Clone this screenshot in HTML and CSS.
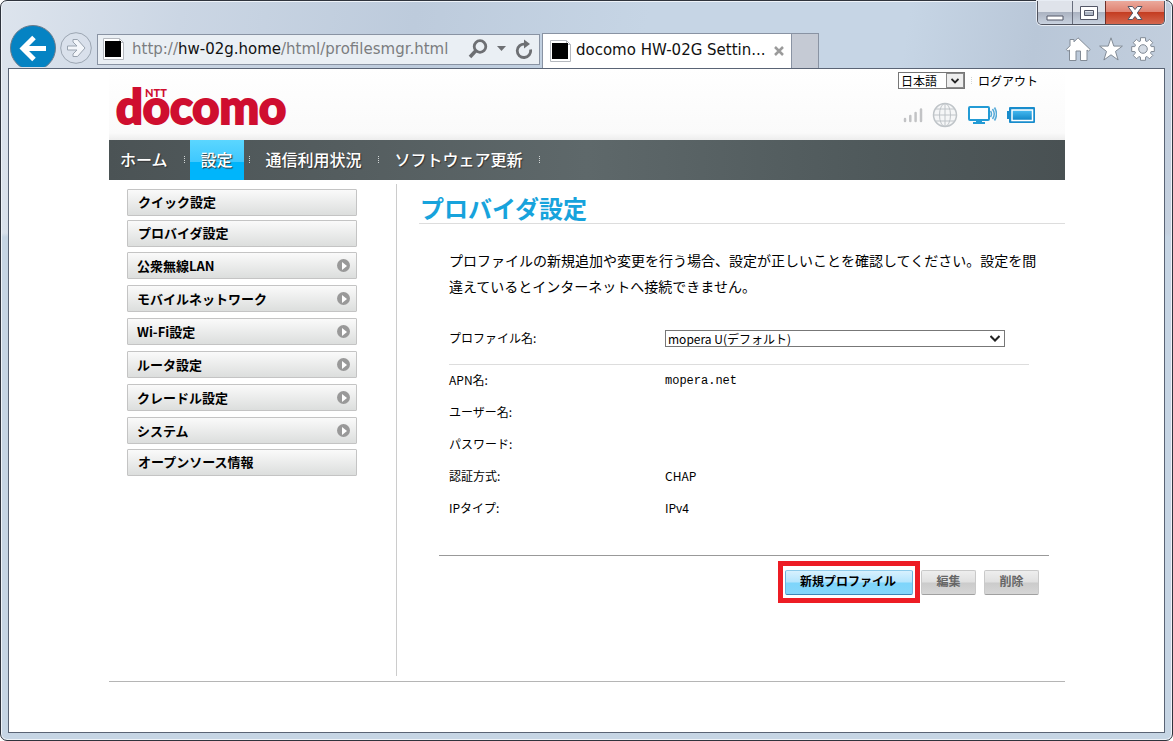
FILE: index.html
```html
<!DOCTYPE html>
<html lang="ja">
<head>
<meta charset="utf-8">
<title>docomo HW-02G Settings</title>
<link rel="stylesheet" href="styles.css">
</head>
<body>
<div class="window">
  <header class="chrome">
    <button class="icon-btn" aria-label="戻る">
      <svg width="46" height="42" viewBox="0 0 46 42"><circle cx="23" cy="23" r="22.5" fill="#0583c3" stroke="#6c7b8a"/><path d="M36 23.500H14M24 12.500L13 23.500L24 34.500" fill="none" stroke="#fff" stroke-width="5"/></svg>
    </button>
    <button class="icon-btn forward" aria-label="進む">
      <svg width="32" height="32" viewBox="0 0 32 32"><circle cx="16" cy="16" r="15.300" fill="#dce3ec" fill-opacity=".6" stroke="#9ba5b1"/><path d="M7.500 14h9.500l-4-4v-2.500h4.500l7.500 8.500-7.500 8.500h-4.500v-2.500l4-4h-9.500z" fill="#f3f6fa" stroke="#99a3af"/></svg>
    </button>
    <div class="address">
      <svg width="23" height="24" viewBox="0 0 23 24"><path d="M1.500 1.500h16l4 4v17h-20z" fill="#fff" stroke="#b5b9bf"/><path d="M17.500 1.500v4h4" fill="none" stroke="#b5b9bf"/><path d="M3 4h16v16H3z"/></svg>
      <div class="url" role="textbox" contenteditable="true" spellcheck="false" aria-label="アドレス">http://<span class="host">hw-02g.home</span>/html/profilesmgr.html</div>
      <button class="icon-btn" aria-label="検索">
        <svg width="20" height="20" viewBox="0 0 20 20" fill="none" stroke="#6d6f73"><circle cx="12" cy="7.500" r="5.800" stroke-width="2.800"/><path d="M8 11.500L2 18" stroke-width="3.500"/></svg>
      </button>
      <button class="icon-btn" aria-label="履歴"><svg width="9" height="5" viewBox="0 0 9 5"><path d="M0 0h9L4.500 5z" fill="#6d6f73"/></svg></button>
      <button class="icon-btn" aria-label="更新">
        <svg width="18" height="20" viewBox="0 0 18 20"><path d="M15.500 10.500A6.700 6.700 0 1 1 10 5.200" fill="none" stroke="#6d6f73" stroke-width="2.800"/><path d="M9 .5v9l6-4.500z" fill="#6d6f73"/></svg>
      </button>
    </div>
    <div class="tab">
      <svg width="23" height="24" viewBox="0 0 23 24"><path d="M1.500 1.500h16l4 4v17h-20z" fill="#fff" stroke="#b5b9bf"/><path d="M17.500 1.500v4h4" fill="none" stroke="#b5b9bf"/><path d="M3 4h16v16H3z"/></svg>
      <span class="tab-title">docomo HW-02G Settin...</span>
      <button class="icon-btn" aria-label="タブを閉じる"><svg width="10" height="10" viewBox="0 0 10 10"><path d="M1 1l8 8M9 1L1 9" stroke="#9b9b9b" stroke-width="2.500"/></svg></button>
    </div>
    <button class="new-tab" aria-label="新しいタブ"></button>
    <div class="commands">
      <button class="icon-btn" aria-label="ホームページ"><svg width="26" height="24" viewBox="0 0 26 24"><path d="M13 .8L25.200 12.500l-1.700 1.700-1.500-1.200v10.500h-6.500v-9.500h-4.500v9.500H4.500V13l-1.500 1.200-1.700-1.700L5 8.800V2.500h4v2.300z" fill="#fff" stroke="#828b96"/></svg></button>
      <button class="icon-btn" aria-label="お気に入り"><svg width="24" height="24" viewBox="0 0 24 24"><path d="M12 .8l2.800 8.300h8.600l-6.900 5.300 2.600 8.600-7.100-5.200L4.900 23l2.600-8.600L.6 9.100h8.600z" fill="#fff" stroke="#828b96"/></svg></button>
      <button class="icon-btn" aria-label="ツール"><svg width="24" height="24" viewBox="0 0 24 24"><path d="M9.500 .7h5v3.200l1.600.7 2.300-2.300 3.400 3.400-2.300 2.300.7 1.600h3.100v4.900h-3.100l-.7 1.600 2.300 2.300-3.400 3.400-2.300-2.300-1.600.7v3.100h-5v-3.100l-1.600-.7-2.300 2.300-3.400-3.400 2.300-2.300-.7-1.600H.7V9.600h3.100l.7-1.600-2.300-2.300 3.400-3.400 2.300 2.300 1.600-.7z" fill="#fff" stroke="#828b96"/><circle cx="12" cy="12" r="4.300" fill="#d5dce5" stroke="#828b96"/></svg></button>
    </div>
    <div class="window-controls">
      <button class="wc-min" aria-label="最小化"><svg width="18" height="14" viewBox="0 0 18 14"><path d="M1 9h16v4H1z" fill="#fff" stroke="#535666"/></svg></button>
      <button class="wc-max" aria-label="最大化"><svg width="18" height="14" viewBox="0 0 18 14"><path d="M.5 .5h17v13H.5zM4.500 4.500v5h9v-5z" fill="#fff" fill-rule="evenodd" stroke="#535666"/></svg></button>
      <button class="wc-close" aria-label="閉じる"><svg width="16" height="14" viewBox="0 0 16 14"><path d="M1 .5h4.500L8 3.500 10.500 .5H15L10.300 7 15 13.500h-4.500L8 10.500l-2.500 3H1L5.700 7z" fill="#fff" stroke="#535666"/></svg></button>
    </div>
  </header>

  <div class="viewport">
    <div class="page">
      <div class="banner">
        <svg class="logo" width="180" height="52" viewBox="0 0 180 52" role="img" aria-label="NTT docomo">
          <text class="logo-name" x="0" y="38">docomo</text>
          <text class="logo-ntt" x="29" y="11">NTT</text>
        </svg>
        <div class="tools">
          <div class="session">
            <span class="select-box language"><select aria-label="言語"><option>日本語</option></select><span class="arrow"><svg width="8" height="6" viewBox="0 0 8 6"><path d="M.5 1L4 4.500 7.500 1" fill="none" stroke="#222" stroke-width="1.800"/></svg></span></span>
            <span class="dots pale"></span>
            <a href="#">ログアウト</a>
          </div>
          <div class="status">
            <svg width="20" height="16" viewBox="0 0 20 16" stroke="#c2c3c5" stroke-width="2.500" stroke-linecap="round"><path d="M2 14v-2M7.300 14V9M12.600 14V6M18 14V2.500"/></svg>
            <svg width="26" height="26" viewBox="0 0 26 26" fill="none" stroke="#bfc4c8"><circle cx="13" cy="13" r="11.500" stroke-width="1.500" fill="#f5f6f7"/><ellipse cx="13" cy="13" rx="5.500" ry="11.500"/><path d="M13 1.500v23M1.500 13h23M3.500 7h19M3.500 19h19"/></svg>
            <svg width="30" height="20" viewBox="0 0 30 20"><rect x="2" y="2" width="20" height="13" rx="1" fill="#fff" stroke="#239bd5" stroke-width="2"/><path d="M9 15h6v2h3v2H6v-2h3z" fill="#239bd5"/><path d="M23.500 6q2 3 0 6M25.500 4q3.500 5 0 10M27.500 2.500q4 6.500 0 13" fill="none" stroke="#55a9d7" stroke-width="1.500"/></svg>
            <svg width="30" height="18" viewBox="0 0 30 18"><defs><linearGradient id="charge" x2="0" y2="1"><stop stop-color="#49bcf2"/><stop offset="1" stop-color="#0d84c6"/></linearGradient></defs><path d="M1 5h2V2q0-1 1-1h24q1 0 1 1v14q0 1-1 1H4q-1 0-1-1v-3H1z" fill="#188ccc"/><rect x="6" y="4" width="20.500" height="10.500" fill="url(#charge)" stroke="#fff" stroke-width="1.500"/></svg>
          </div>
        </div>
      </div>

      <nav class="main-nav">
        <a href="#">ホーム</a><span class="dots"></span>
        <a href="#" class="active">設定</a><span class="dots"></span>
        <a href="#">通信利用状況</a><span class="dots"></span>
        <a href="#">ソフトウェア更新</a><span class="dots"></span>
      </nav>

      <div class="columns">
        <nav class="side-nav">
          <a href="#">クイック設定</a>
          <a href="#">プロバイダ設定</a>
          <a href="#" class="group">公衆無線LAN</a>
          <a href="#" class="group">モバイルネットワーク</a>
          <a href="#" class="group">Wi-Fi設定</a>
          <a href="#" class="group">ルータ設定</a>
          <a href="#" class="group">クレードル設定</a>
          <a href="#" class="group">システム</a>
          <a href="#">オープンソース情報</a>
        </nav>
        <main class="content">
          <h1>プロバイダ設定</h1>
          <p class="intro">プロファイルの新規追加や変更を行う場合、設定が正しいことを確認してください。設定を間違えているとインターネットへ接続できません。</p>
          <div class="profile">
            <label for="profile">プロファイル名:</label>
            <span class="select-box wide"><select id="profile"><option>mopera U(デフォルト)</option></select><span class="arrow"><svg width="10" height="7" viewBox="0 0 10 7"><path d="M.5 1L5 5.500 9.500 1" fill="none" stroke="#222" stroke-width="2"/></svg></span></span>
          </div>
          <dl class="details">
            <dt>APN名:</dt><dd class="mono">mopera.net</dd>
            <dt>ユーザー名:</dt><dd></dd>
            <dt>パスワード:</dt><dd></dd>
            <dt>認証方式:</dt><dd>CHAP</dd>
            <dt>IPタイプ:</dt><dd>IPv4</dd>
          </dl>
          <div class="actions">
            <span class="highlight"><button class="btn primary">新規プロファイル</button></span>
            <button class="btn" disabled>編集</button>
            <button class="btn" disabled>削除</button>
          </div>
        </main>
      </div>
    </div>
  </div>
</div>
</body>
</html>
```
FILE: styles.css
```css
* { box-sizing: border-box; }

body {
  margin: 0;
  background: #fff;
  color: #000;
  font-family: "Noto Sans CJK JP", sans-serif;
  font-size: 12px;
}

a { color: inherit; text-decoration: none; }
svg { display: block; flex: none; }
button, select { font: inherit; margin: 0; }

.window {
  position: relative;
  display: flex;
  flex-direction: column;
  min-height: 100vh;
  padding: 0 7px 7px;
  border: 1px solid #2f343d;
  border-radius: 7px;
  box-shadow: inset 0 0 0 1px #eef3f9;
  background: linear-gradient(180deg, transparent 0 232px, #c6d5e4 236px),
    linear-gradient(100deg, #dde4ed 0, #cbd6e4 14%, #bdcbdc 32%, #c6d5e5 50%, #c6d5e5 70%, #b9c7d8 80%, #c3cfde 92%, #d9e0e9);
}

/* Browser chrome */
.chrome {
  display: flex;
  align-items: flex-end;
  height: 67px;
  padding-left: 2px;
}
.icon-btn {
  display: flex;
  flex: none;
  padding: 0;
  border: 0;
  background: none;
}
.chrome > .icon-btn { margin-bottom: 1px; }
.chrome > .icon-btn.forward { margin: 0 5px 4px 4px; }
.address {
  display: flex;
  align-items: center;
  flex: 0 1 443px;
  height: 31px;
  margin: 0 2px 3px 0;
  padding: 0 6px 2px 4px;
  border: 1px solid #8993a3;
  background: #eaeff4;
}
.address .icon-btn { margin-left: 9px; }
.address .url + .icon-btn { margin-left: 6px; }
.url {
  flex: 1;
  padding-left: 7px;
  overflow: hidden;
  white-space: nowrap;
  color: #7b7d80;
  font: 15px "DejaVu Sans", sans-serif;
}
.host { color: #111; }
.tab {
  display: flex;
  align-items: center;
  flex: 0 1 250px;
  height: 35px;
  padding: 0 7px 0 6px;
  border: 1px solid #8993a3;
  border-bottom: 0;
  background: #fff;
}
.tab-title {
  flex: 1;
  padding: 0 0 2px 4px;
  overflow: hidden;
  white-space: nowrap;
  color: #111;
  font: 15px "DejaVu Sans", sans-serif;
}
.new-tab {
  width: 27px;
  height: 35px;
  padding: 0;
  border: 1px solid #8993a3;
  border-width: 1px 1px 0 0;
  background: #c5cad4;
}
.commands {
  display: flex;
  gap: 8px;
  margin: 0 10px 7px auto;
}
.window-controls {
  position: absolute;
  top: 0;
  right: 7px;
  display: flex;
  height: 24px;
  border: 1px solid #50535e;
  border-top: 0;
  border-radius: 0 0 5px 5px;
  box-shadow: 0 0 0 1px #e8edf4;
  overflow: hidden;
}
.window-controls button {
  display: flex;
  align-items: center;
  justify-content: center;
  width: 34px;
  padding: 0;
  border: 0;
  background: linear-gradient(#dfe3ea 0 48%, #abb3c1 50%, #c9d2df);
}
.window-controls .wc-min { padding-top: 2px; }
.window-controls .wc-max { width: 33px; border-left: 1px solid #676d7c; }
.window-controls .wc-close {
  width: 59px;
  border-left: 1px solid #6b2f28;
  background: linear-gradient(#eba99c 0, #df8170 48%, #c43d22 50%, #d5674e);
}

/* Page */
.viewport {
  flex: 1;
  padding: 0 99px 50px 100px;
  border: 1px solid #5a6475;
  background: #fff;
}
.page { border-bottom: 1px solid #b5b5b5; }
.banner {
  display: flex;
  justify-content: space-between;
  height: 71px;
  padding: 3px 27px 0 7px;
  background: linear-gradient(#fff, #fafafa 90%, #ededed);
}
.logo {
  margin-top: 14px;
  overflow: visible;
  fill: #cf0e2f;
  stroke: #cf0e2f;
}
.logo-name { font: 900 47px Lato, sans-serif; stroke-width: 2px; }
.logo-ntt { font: 900 11px Lato, sans-serif; stroke-width: 0; }
.tools {
  display: flex;
  flex-direction: column;
  align-items: flex-end;
  gap: 13px;
}
.session { display: flex; align-items: center; line-height: 17px; }
.session .dots { margin: 0 6px; }
.status { display: flex; align-items: center; gap: 9px; padding-right: 2px; }
.select-box { position: relative; display: block; height: 17px; }
.select-box select {
  display: block;
  width: 100%;
  height: 100%;
  padding: 0 2px;
  border: 1px solid #777;
  border-radius: 0;
  background: #fff;
  color: #000;
  line-height: 15px;
  appearance: none;
}
.arrow {
  position: absolute;
  inset: 1px 1px 1px auto;
  display: flex;
  align-items: center;
  justify-content: center;
  width: 18px;
  pointer-events: none;
}
.language { width: 67px; }
.language .arrow { border: 1px solid #8a8a8a; background: #eee; }
.dots {
  flex: none;
  width: 1px;
  height: 8px;
  background: repeating-linear-gradient(#d3d7d7 0 1px, transparent 1px 2px);
}

.main-nav {
  display: flex;
  align-items: center;
  height: 40px;
  background: linear-gradient(90deg, #4b5355, #5e686a 50%, #4f595b 80%, #495153);
  color: #fff;
  font-size: 16px;
  font-weight: 500;
  line-height: 38px;
}
.main-nav a { height: 40px; padding: 0 11px; text-shadow: 1px 1px 1px #333; }
.main-nav .dots { margin: 0 5px; }
.main-nav .active { background: linear-gradient(#5bd6ff, #3fc8fe 54%, #00b5fb 56%); }

.columns { display: flex; padding: 4px 0 5px 18px; }
.side-nav {
  display: flex;
  flex-direction: column;
  flex: none;
  width: 270px;
  min-height: 492px;
  padding: 5px 39px 0 0;
  border-right: 1px solid #ccc;
  font-size: 13px;
  font-weight: 700;
}
.side-nav a {
  display: flex;
  align-items: center;
  height: 27px;
  margin-bottom: 4px;
  padding: 0 6px 2px 10px;
  border: 1px solid #c4c4c4;
  border-radius: 1px;
  background: linear-gradient(#fafafa, #dcdedd);
}
.side-nav .group {
  position: relative;
  margin: 1px 0 5px;
  padding: 0 6px 0 9px;
  line-height: 17px;
}
.side-nav .group::after {
  content: "";
  width: 13px;
  height: 13px;
  margin-left: auto;
  border-radius: 50%;
  background: #999;
}
.side-nav .group::before {
  content: "";
  position: absolute;
  right: 9px;
  z-index: 1;
  border: 4px solid transparent;
  border-right: 0;
  border-left: 5px solid #fff;
}

.content { flex: 1; padding-left: 22px; }
.content h1 {
  margin: 8px 0 0;
  padding-left: 1px;
  border-bottom: 1px solid #ddd;
  color: #17a3dc;
  font-size: 24px;
  line-height: 31px;
}
.intro {
  margin: 23px 20px 0 30px;
  font-size: 14px;
  line-height: 26px;
}
.profile {
  display: grid;
  grid-template-columns: 216px minmax(0, 340px);
  align-items: center;
  margin: 0 36px 0 30px;
  padding: 31px 0 17px;
  border-bottom: 1px solid #ddd;
}
.profile label { line-height: 15px; padding-bottom: 2px; }
.details {
  display: grid;
  grid-template-columns: 216px 1fr;
  grid-auto-rows: 32px;
  margin: 0 36px 0 30px;
  line-height: 30px;
}
.details dd { margin: 0; }
.details .mono { font-family: "Liberation Mono", monospace; line-height: 32px; }
.actions {
  display: flex;
  justify-content: flex-end;
  gap: 8px;
  margin: 30px 16px 0 20px;
  padding: 14px 10px 0 0;
  border-top: 1px solid #999;
}
.highlight { position: relative; }
.highlight::after {
  content: "";
  position: absolute;
  inset: -9px -7px -8px;
  border: 5px solid #ed1c24;
  pointer-events: none;
}
.btn {
  display: block;
  min-width: 55px;
  height: 25px;
  padding: 0 14px 4px;
  border: 1px solid #c9c9c9;
  border-bottom-color: #a0a0a0;
  border-radius: 2px;
  background: linear-gradient(#eee, #e0e0e0 48%, #cbcbcb 52%, #d6d6d6);
  color: #666;
  font-weight: 700;
  line-height: 18px;
}
.btn.primary {
  width: 128px;
  padding: 0 14px 4px 12px;
  border-color: #8ecbea #6cb4dd #3e86b6;
  background: linear-gradient(#d8f1fe, #b4e5fd 48%, #7dd5fb 52%, #85d6fa);
  color: #000;
}
```
